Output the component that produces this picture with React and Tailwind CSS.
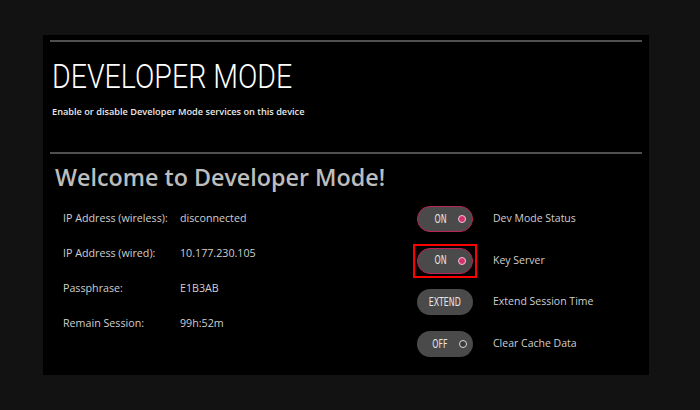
import React from "react";

const cond = "[font-family:'DejaVu_Sans_Condensed','DejaVu_Sans',sans-serif]";

function PillText({ children }) {
  return (
    <span className={"inline-block origin-center scale-x-[0.7] text-[12.5px] leading-none text-[#e6e6e6] " + cond}>
      {children}
    </span>
  );
}

function Toggle({ state }) {
  const on = state === "on";
  return (
    <div
      className={
        "flex h-[26px] w-[56px] items-center justify-between rounded-full bg-[#4a4a4a] pl-[12px] pr-[6px] " +
        (on ? "border-[1.5px] border-[#b8245a]" : "")
      }
    >
      <span className="flex w-[22px] justify-center">
        <PillText>{on ? "ON" : "OFF"}</PillText>
      </span>
      <span
        className={
          "block h-[8px] w-[8px] rounded-full " +
          (on ? "border border-[#f2c5d4] bg-[#d2336f]" : "border-[1.5px] border-[#d9d9d9] bg-[#3a3a3a]")
        }
      />
    </div>
  );
}

function Row({ children, label }) {
  return (
    <div className="flex h-[41.7px] items-center">
      <div className="flex w-[76px] justify-center">{children}</div>
      <span className="ml-[10px] text-[10.5px] text-[#cfcfcf] [font-family:'Open_Sans',sans-serif]">{label}</span>
    </div>
  );
}

export default function App() {
  const info = [
    ["IP Address (wireless):", "disconnected"],
    ["IP Address (wired):", "10.177.230.105"],
    ["Passphrase:", "E1B3AB"],
    ["Remain Session:", "99h:52m"],
  ];
  return (
    <div className="h-[410px] w-[700px] bg-[#121212] pl-[43px] pt-[35px]">
      <div className="flex h-[340px] w-[606px] flex-col bg-black">
        <div className="mx-[7px] mt-[5px] h-[2px] bg-[#4f4f4f]" />
        <div className="ml-[9px] mt-[16px] origin-left scale-x-[0.84] whitespace-nowrap text-[34px] font-light leading-[36px] text-white [font-family:Roboto,sans-serif]">
          DEVELOPER MODE
        </div>
        <div className="ml-[9px] mt-[12px] text-[9.2px] font-semibold leading-[12px] text-[#e8e8e8] [font-family:'Open_Sans',sans-serif]">
          Enable or disable Developer Mode services on this device
        </div>
        <div className="mx-[7px] mt-[34px] h-[2px] bg-[#4f4f4f]" />
        <div className="ml-[12px] mt-[8px] text-[23.3px] font-semibold leading-[30px] text-[#bdbdbd] [font-family:'Open_Sans',sans-serif]">
          Welcome to Developer Mode!
        </div>
        <div className="mt-[6px] flex">
          <div className="ml-[20px] flex w-[340px] flex-col pt-[3px]">
            {info.map(([k, v]) => (
              <div key={k} className="flex h-[35px] items-center text-[10.7px] text-[#cfcfcf] [font-family:'Open_Sans',sans-serif]">
                <span className="w-[117px]">{k}</span>
                <span>{v}</span>
              </div>
            ))}
          </div>
          <div className="ml-[4px] flex flex-col">
            <Row label="Dev Mode Status">
              <Toggle state="on" />
            </Row>
            <Row label="Key Server">
              <div className="border-2 border-[#ff0000] p-[2px]">
                <Toggle state="on" />
              </div>
            </Row>
            <Row label="Extend Session Time">
              <div className="flex h-[26px] w-[56px] items-center justify-center rounded-full bg-[#4a4a4a]">
                <PillText>EXTEND</PillText>
              </div>
            </Row>
            <Row label="Clear Cache Data">
              <Toggle state="off" />
            </Row>
          </div>
        </div>
      </div>
    </div>
  );
}
